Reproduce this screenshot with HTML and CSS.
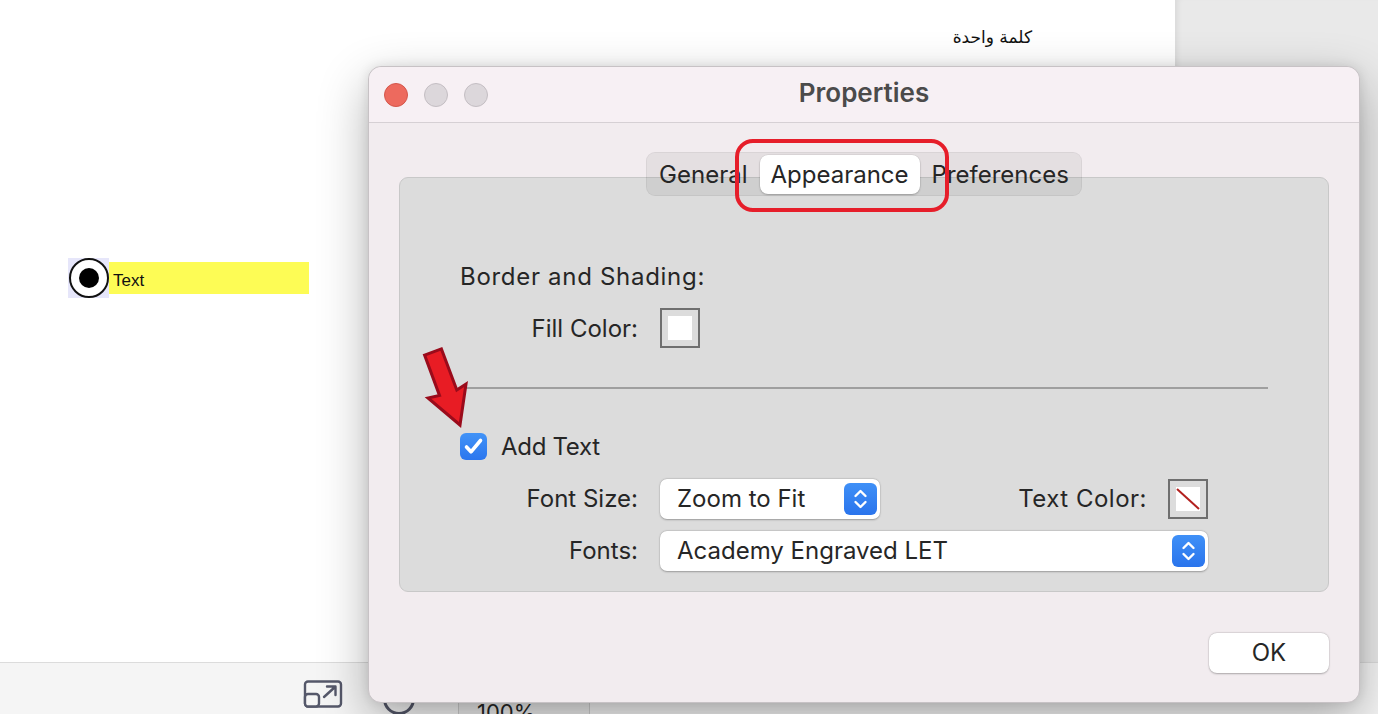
FILE: index.html
```html
<!DOCTYPE html>
<html>
<head>
<meta charset="utf-8">
<link rel="stylesheet" href="styles.css">
</head>
<body>
<div class="app">
  <div class="main">
    <div class="doc">
      <div class="arabic" dir="rtl">كلمة واحدة</div>
      <div class="field">
        <div class="radio"><span class="dot"></span></div>
        <div class="yellow">Text</div>
      </div>
    </div>
    <div class="side"></div>
  </div>
  <div class="statusbar">
    <svg class="expand" width="40" height="28" viewBox="0 0 40 28">
      <rect x="2" y="1.5" width="36" height="25" rx="3" fill="none" stroke="#55586a" stroke-width="2.4"/>
      <rect x="2" y="14" width="14" height="12.5" rx="3" fill="#f5f5f5" stroke="#55586a" stroke-width="2.4"/>
      <path d="M21 17 L32 7 M24 6.5 H32.5 V15" fill="none" stroke="#55586a" stroke-width="2.4" stroke-linecap="round" stroke-linejoin="round"/>
    </svg>
    <div class="circ"></div>
    <div class="zoombox">100%</div>
  </div>
</div>

<div class="dialog">
  <div class="titlebar">
    <div class="lights">
      <span class="light red"></span>
      <span class="light gray"></span>
      <span class="light gray"></span>
    </div>
    <div class="title">Properties</div>
  </div>
  <div class="dbody">
    <div class="tabs">
      <span class="tab">General</span>
      <span class="tab selected">Appearance</span>
      <span class="tab">Preferences</span>
    </div>
    <div class="panel">
      <div class="heading">Border and Shading:</div>
      <div class="row fillrow">
        <span class="label">Fill Color:</span>
        <span class="swatch"><span class="swatch-in"></span></span>
      </div>
      <div class="sep"></div>
      <div class="check-row">
        <span class="checkbox">
          <svg width="27" height="27" viewBox="0 0 27 27"><path d="M6.5 14 L11 18.8 L20.5 7.5" fill="none" stroke="#fff" stroke-width="3.6" stroke-linecap="round" stroke-linejoin="round"/></svg>
        </span>
        <span class="check-label">Add Text</span>
      </div>
      <div class="row sizerow">
        <span class="label">Font Size:</span>
        <div class="popup small">
          <span class="ptext">Zoom to Fit</span>
          <span class="stepper"><svg width="33" height="32" viewBox="0 0 33 32"><path d="M11.5 13 L16.5 8 L21.5 13 M11.5 19 L16.5 24 L21.5 19" fill="none" stroke="#fff" stroke-width="2.4" stroke-linecap="round" stroke-linejoin="round"/></svg></span>
        </div>
        <span class="tclabel">Text Color:</span>
        <span class="swatch"><span class="swatch-in none"><svg width="24" height="24" viewBox="0 0 24 24"><line x1="1" y1="2" x2="23" y2="22" stroke="#b3201e" stroke-width="2"/></svg></span></span>
      </div>
      <div class="row fontsrow">
        <span class="label">Fonts:</span>
        <div class="popup wide">
          <span class="ptext">Academy Engraved LET</span>
          <span class="stepper"><svg width="33" height="32" viewBox="0 0 33 32"><path d="M11.5 13 L16.5 8 L21.5 13 M11.5 19 L16.5 24 L21.5 19" fill="none" stroke="#fff" stroke-width="2.4" stroke-linecap="round" stroke-linejoin="round"/></svg></span>
        </div>
      </div>
    </div>
    <div class="footer">
      <button class="ok">OK</button>
    </div>
  </div>
  <div class="annot-rect"></div>
</div>
<svg class="annot-arrow" width="60" height="90" viewBox="0 0 60 90">
  <polygon points="9.6,15.1 26.4,8.9 41.8,50 51,44 45,85 13,58 24.5,55.5" fill="#e81c24" stroke="#9a0b1b" stroke-width="3" stroke-linejoin="miter"/>
</svg>
</body>
</html>
```

FILE: styles.css
```css
* { box-sizing: border-box; }
html, body { margin: 0; padding: 0; }
body {
  width: 1378px;
  height: 714px;
  overflow: hidden;
  position: relative;
  font-family: Inter, "Noto Sans", "Liberation Sans", sans-serif;
  color: #262626;
  background: #fff;
}
.app {
  display: flex;
  flex-direction: column;
  height: 714px;
}
.main {
  display: flex;
  flex: 1;
}
.doc {
  width: 1175px;
  background: #fff;
  position: relative;
}
.side {
  flex: 1;
  background: #e9e9e9;
  box-shadow: inset 6px 0 6px -4px rgba(0,0,0,0.08);
}
.arabic {
  position: absolute;
  left: 932px;
  top: 27px;
  width: 100px;
  font-family: "DejaVu Sans", sans-serif;
  font-size: 17px;
  color: #111;
  text-align: right;
}
.field {
  position: absolute;
  left: 68px;
  top: 258px;
  display: flex;
  align-items: center;
}
.radio {
  width: 41px;
  height: 40px;
  background: #e6e6fa;
  display: flex;
  align-items: center;
  justify-content: center;
}
.radio .dot {
  width: 40px;
  height: 40px;
  border-radius: 50%;
  border: 2px solid #111;
  background: #fff;
  display: flex;
  align-items: center;
  justify-content: center;
}
.radio .dot::after {
  content: "";
  width: 20px;
  height: 20px;
  border-radius: 50%;
  background: #000;
}
.yellow {
  width: 200px;
  height: 32px;
  background: #fdfc55;
  font-family: "Liberation Sans", Arial, sans-serif;
  font-size: 17px;
  line-height: 32px;
  padding: 3px 0 0 4px;
  color: #111;
}
.statusbar {
  height: 52px;
  background: #f5f5f5;
  border-top: 1px solid #dcdcdc;
  display: flex;
  align-items: flex-start;
  padding-left: 303px;
}
.expand { margin-top: 17px; }
.circ {
  width: 32px;
  height: 32px;
  border-radius: 50%;
  border: 3px solid #55586a;
  margin-left: 40px;
  margin-top: 20px;
}
.zoombox {
  margin-left: 43px;
  width: 132px;
  height: 51px;
  border-left: 1px solid #cfcfcf;
  border-right: 1px solid #cfcfcf;
  background: #ececec;
  font-size: 22px;
  padding-top: 36px;
  padding-left: 18px;
}

/* dialog window */
.dialog {
  position: absolute;
  left: 368px;
  top: 66px;
  width: 992px;
  height: 637px;
  background: #f2ecef;
  border-radius: 13px;
  border: 1px solid #c7c2c5;
  box-shadow: 0 18px 50px rgba(0,0,0,0.30), 0 0 12px rgba(0,0,0,0.10);
}
.titlebar {
  height: 56px;
  background: #f7f0f4;
  border-bottom: 1px solid #d6d0d4;
  border-radius: 13px 13px 0 0;
  display: flex;
  align-items: center;
  position: relative;
}
.lights {
  display: flex;
  gap: 16px;
  padding-left: 15px;
}
.light {
  width: 24px;
  height: 24px;
  border-radius: 50%;
}
.light.red { background: #ed6a5e; border: 1px solid #d4564b; }
.light.gray { background: #dcd7db; border: 1px solid #c4bec3; }
.title {
  position: absolute;
  left: 0;
  right: 0;
  text-align: center;
  font-size: 26px;
  font-weight: 600;
  color: #4b4b4b;
  top: 10px;
}
.dbody {
  padding: 29px 30px 0 30px;
  display: flex;
  flex-direction: column;
}
.tabs {
  align-self: center;
  position: relative;
  z-index: 1;
  display: flex;
  align-items: center;
  height: 44px;
  padding: 0 1px;
  background: rgba(0,0,0,0.055);
  border: 1px solid rgba(0,0,0,0.05);
  border-radius: 9px;
  gap: 1px;
}
.tab {
  font-size: 24px;
  color: #262626;
  padding: 0 11px;
  height: 39px;
  line-height: 39px;
  border-radius: 8px;
}
.tab.selected {
  background: #fff;
  box-shadow: 0 1px 2px rgba(0,0,0,0.22), 0 0 0 0.5px rgba(0,0,0,0.08);
}
.panel {
  margin-top: -19px;
  width: 930px;
  background: #dcdcdc;
  border: 1px solid #c8c8c8;
  border-radius: 9px;
  padding: 85px 60px 20px 60px;
}
.heading {
  font-size: 24px;
  line-height: 28px;
  letter-spacing: 0.7px;
}
.row {
  display: flex;
  align-items: center;
}
.label {
  width: 178px;
  text-align: right;
  font-size: 24px;
  margin-right: 22px;
}
.fillrow { margin-top: 17px; height: 40px; }
.swatch {
  width: 40px;
  height: 40px;
  border: 2px solid #6f6f6f;
  padding: 6px;
  display: block;
}
.swatch-in {
  display: block;
  width: 24px;
  height: 24px;
  background: #fff;
}
.swatch-in svg { display: block; }
.sep {
  margin-top: 39px;
  height: 1.5px;
  background: #9f9f9f;
}
.check-row {
  margin-top: 44px;
  display: flex;
  align-items: center;
  height: 28px;
}
.checkbox {
  width: 27px;
  height: 27px;
  border-radius: 6px;
  background: linear-gradient(#4293f7, #2b76ee);
  display: block;
}
.checkbox svg { display: block; }
.check-label {
  font-size: 24px;
  margin-left: 14px;
  letter-spacing: -0.3px;
}
.sizerow { margin-top: 18px; height: 40px; width: 748px; }
.fontsrow { margin-top: 12px; height: 40px; }
.popup {
  height: 40px;
  background: #fff;
  border-radius: 7px;
  box-shadow: 0 0.5px 2px rgba(0,0,0,0.28), 0 0 0 0.5px rgba(0,0,0,0.06);
  display: flex;
  align-items: center;
  padding-left: 17px;
  padding-right: 3px;
}
.popup.small { width: 220px; }
.popup.wide { width: 548px; }
.ptext {
  font-size: 24px;
  flex: 1;
}
.stepper {
  width: 33px;
  height: 32px;
  border-radius: 6px;
  background: linear-gradient(#3f90f7, #2a74ec);
  display: block;
}
.stepper svg { display: block; }
.tclabel {
  font-size: 24px;
  margin-left: auto;
  margin-right: 21px;
  letter-spacing: 0.5px;
}
.footer {
  display: flex;
  justify-content: flex-end;
  margin-top: 41px;
}
.ok {
  width: 120px;
  height: 40px;
  border: none;
  border-radius: 8px;
  background: #fff;
  box-shadow: 0 0.5px 2px rgba(0,0,0,0.28), 0 0 0 0.5px rgba(0,0,0,0.06);
  font-family: inherit;
  font-size: 24px;
  color: #262626;
  padding: 0;
}

/* annotations */
.annot-rect {
  position: absolute;
  left: 366px;
  top: 72px;
  width: 214px;
  height: 73px;
  border: 4px solid #e61e2a;
  border-radius: 18px;
  z-index: 2;
}
.annot-arrow {
  position: absolute;
  left: 415px;
  top: 340px;
  z-index: 3;
}
```
